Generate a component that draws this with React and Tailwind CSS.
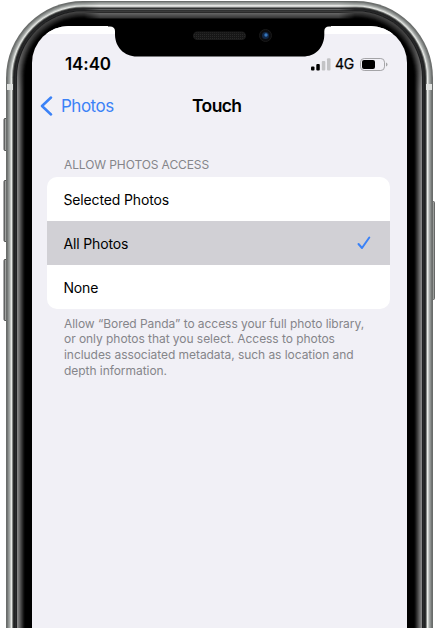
const rings = [
  [0, '#6a6d6b'], [1, '#747776'], [2, '#8c908e'], [3, '#a0a4a2'], [4, '#c4c7c4'], [5, '#e8eae7'],
  [6, '#858885'], [7, '#303131'], [8, '#202122'], [9, '#292a2b'], [10, '#202122'], [11, '#858585'],
  [12, '#777777'], [13, '#666666'], [14, '#525252'], [15, '#3d3d3d'], [16, '#292929'],
  [17, '#151515'], [18, '#060606'], [19, '#000000'],
];

const topBands = [
  '#6a6d6b', '#8c908e', '#a0a4a2', '#b8bbb8', '#e4e5e3', '#d0d1cf', '#7a7c7b', '#303131', '#606262',
  '#303131', '#3a3a3a', '#2a2a2a', '#626262', '#585858', '#4e4e4e', '#444444', '#3a3a3a', '#181818',
];

function PhoneFrame() {
  return (
    <svg className="pointer-events-none absolute inset-0" width="438" height="628" viewBox="0 0 438 628">
      <defs>
        <linearGradient id="button" x1="0" x2="1">
          <stop offset="0" stopColor="#555" />
          <stop offset="0.45" stopColor="#c9cbc9" />
          <stop offset="1" stopColor="#777977" />
        </linearGradient>
        <linearGradient id="topFade" x1="84" x2="355" gradientUnits="userSpaceOnUse">
          <stop offset="0" stopColor="#fff" stopOpacity="0" />
          <stop offset="0.06" stopColor="#fff" />
          <stop offset="0.94" stopColor="#fff" />
          <stop offset="1" stopColor="#fff" stopOpacity="0" />
        </linearGradient>
        <linearGradient id="cornerShade" x1="0" y1="12" x2="0" y2="90" gradientUnits="userSpaceOnUse">
          <stop offset="0" stopColor="#000" stopOpacity="0.5" />
          <stop offset="0.3" stopColor="#000" stopOpacity="0.5" />
          <stop offset="1" stopColor="#000" stopOpacity="0" />
        </linearGradient>
        <mask id="topMask"><rect x="84" y="0" width="271" height="30" fill="url(#topFade)" /></mask>
        <pattern id="mesh" width="2" height="2" patternUnits="userSpaceOnUse">
          <rect width="2" height="2" fill="#171717" />
          <rect width="1" height="1" fill="#292929" />
        </pattern>
      </defs>
      {[[118, 33], [180, 62], [259, 62]].map(([y, h]) => (
        <rect key={y} x="4" y={y + 0.5} width="5" height={h - 1} rx="1" fill="url(#button)" stroke="#555756" />
      ))}
      <rect x="430.5" y="201.5" width="4" height="98" rx="1" fill="url(#button)" stroke="#666867" />
      {rings.map(([d, color]) => (
        <rect key={d} x={6 + d} y={1 + d * 0.93} width={427 - d * 2} height="900" rx={77 - d} fill={color} />
      ))}
      <path d="M20.5 90 V79 A62.5 62.5 0 0 1 83 15 H356 A62.5 62.5 0 0 1 418.5 79 V90" fill="none" stroke="url(#cornerShade)" strokeWidth="8" />
      <g mask="url(#topMask)">
        {topBands.map((color, i) => (
          <rect key={i} x="84" y={i + 1} width="271" height="1" fill={color} />
        ))}
      </g>
      <rect x="7" y="84" width="6" height="6" fill="#dfe1df" />
      <rect x="426" y="84" width="6" height="6" fill="#dfe1df" />
    </svg>
  );
}

function Notch() {
  return (
    <svg className="absolute left-[76px] top-0" width="223" height="31" viewBox="108 26 223 31">
      <path d="M108 26 H331 V26.5 H329 Q324.5 26.5 324.3 31 V35 C324 48 315 56.5 303 56.5 H137 C124 56.5 115.3 47 115 35 V31 Q114.8 26.5 110 26.5 H108 Z" fill="#000" />
      <rect x="193" y="31.5" width="53" height="8.5" rx="4.25" fill="#1b1b1b" />
      <rect x="194" y="32.5" width="51" height="6.5" rx="3.25" fill="url(#mesh)" />
      <circle cx="265.5" cy="35.5" r="6" fill="#0b0b0d" stroke="#191919" />
      <circle cx="265.5" cy="35.5" r="3.5" fill="#122847" />
      <circle cx="266" cy="35" r="1.7" fill="#3676bd" />
    </svg>
  );
}

function StatusIcons() {
  return (
    <div className="flex items-center">
      <svg width="20" height="13" viewBox="0 0 20 13">
        <rect x="0" y="8.5" width="3.5" height="4" rx="1" fill="#000" />
        <rect x="5.3" y="6" width="3.5" height="6.5" rx="1" fill="#000" />
        <rect x="10.8" y="3" width="3.5" height="9.5" rx="1" fill="#c3c3c6" />
        <rect x="16" y="0.3" width="3.5" height="12.2" rx="1" fill="#c3c3c6" />
      </svg>
      <span className="ml-1 w-[25px] text-[14px] leading-4 tracking-[-0.2px] [-webkit-text-stroke:0.25px_black]">4G</span>
      <svg width="28" height="13" viewBox="0 0 28 13">
        <rect x="0.5" y="0.5" width="24" height="12" rx="3.7" fill="none" stroke="#a4a4a7" />
        <rect x="2" y="2" width="13" height="9" rx="2" fill="#000" />
        <path d="M26 4.5 Q27.5 5 27.5 6.5 T26 8.5 Z" fill="#a4a4a7" />
      </svg>
    </div>
  );
}

export default function App() {
  return (
    <div className="relative h-[628px] w-[438px] overflow-hidden bg-white pt-[26px] pl-8 font-['Inter',sans-serif] text-black">
      <PhoneFrame />
      <main className="relative h-[602px] w-[375px] overflow-hidden rounded-t-[37px] bg-[#f1f0f6]">
        <div className="h-2 bg-white" />
        <Notch />
        <div className="flex h-[60px] items-center justify-between pr-[19px] pl-[33px]">
          <span className="text-[17px] leading-5 font-semibold tracking-[-0.1px]">14:40</span>
          <StatusIcons />
        </div>
        <header className="-mt-[6px] flex h-[35px] items-center">
          <button className="ml-2 flex items-center gap-[8px] text-[#3b82f7]">
            <svg width="13" height="20" viewBox="0 0 13 20" fill="none" stroke="currentColor" strokeWidth="2.5" strokeLinecap="round" strokeLinejoin="round">
              <path d="M11 1.5 L2 10 L11 18.5" />
            </svg>
            <span className="w-[53px] text-left text-[17px] leading-5 tracking-[-0.5px]">Photos</span>
          </button>
          <h1 className="ml-[78px] text-[17.5px] leading-5 font-semibold tracking-[-0.6px]">Touch</h1>
        </header>
        <h2 className="mt-[34px] ml-8 text-[12px] leading-4 tracking-[-0.1px] text-[#85858a]">ALLOW PHOTOS ACCESS</h2>
        <section className="mt-1 ml-[15.4px] w-[343px] overflow-hidden rounded-[10px] bg-white text-[14px] tracking-[-0.13px]">
          <div className="flex h-[44px] items-center pl-[16px]">Selected Photos</div>
          <div className="flex h-[44px] items-center justify-between bg-[#d1d0d5] pr-[19px] pl-[16px]">
            All Photos
            <svg width="14" height="14" viewBox="0 0 14 14" fill="none" stroke="#3b82f7" strokeWidth="2" strokeLinecap="round" strokeLinejoin="round">
              <path d="M1.5 8 L5 12 L12.3 1.5" />
            </svg>
          </div>
          <div className="flex h-[44px] items-center pl-[16px]">None</div>
        </section>
        <p className="mt-[6.6px] ml-8 text-[12px] leading-[15.7px] tracking-[-0.05px] whitespace-nowrap text-[#85858a]">
          Allow “Bored Panda” to access your full photo library,<br />
          or only photos that you select. Access to photos<br />
          includes associated metadata, such as location and<br />
          depth information.
        </p>
      </main>
    </div>
  );
}
